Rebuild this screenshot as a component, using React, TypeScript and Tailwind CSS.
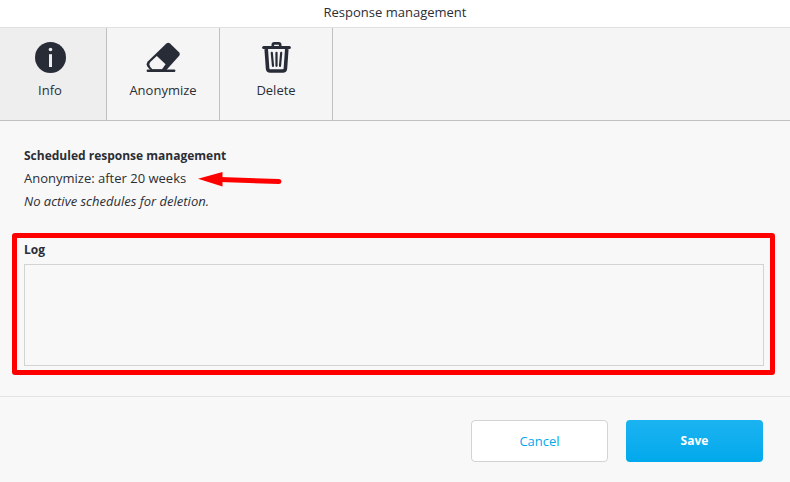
import type { ReactNode } from "react";
import { clsx } from "clsx";

const InfoIcon = () => (
    <svg className="h-9 w-9" viewBox="0 0 36 36" fill="none" aria-hidden="true">
        <circle cx="18.5" cy="17.5" r="15.5" fill="#282c37" />
        <circle cx="18.5" cy="9.5" r="1.8" fill="#eeeeee" />
        <path d="M17 14.2h3v12.8h-3z" fill="#eeeeee" />
    </svg>
);

const EraserIcon = () => (
    <svg className="h-9 w-9" viewBox="0 0 36 36" fill="none" aria-hidden="true">
        <path d="M21.4 3.6Q23.2 2 25 3.6L34 12.2Q35.6 14 34.2 15.8L21.4 30H5.6Q1.8 26.6 1.6 24.4Q1.6 22.6 3 21.2Z" fill="#282c37" />
        <path d="M11.8 16L20.6 24.2L17 29.2H7.4Q4.4 26.4 4.4 24.6Q4.4 23 5.6 21.8Z" fill="#f5f5f5" />
        <path d="M2.8 30.8h26.4" stroke="#282c37" strokeWidth="2.4" strokeLinecap="round" />
    </svg>
);

const TrashIcon = () => (
    <svg className="h-9 w-9" viewBox="0 0 36 36" fill="none" aria-hidden="true">
        <path d="M14.8 6.5V4.9Q14.8 3.4 16.3 3.4H20.7Q22.2 3.4 22.2 4.9V6.5" stroke="#282c37" strokeWidth="2.6" />
        <path d="M5.6 7.4h25.8" stroke="#282c37" strokeWidth="3" strokeLinecap="round" />
        <path d="M8.2 9L9.6 28.6Q9.8 31 12.2 31H24.8Q27.2 31 27.4 28.6L28.8 9" stroke="#282c37" strokeWidth="3.6" />
        <path d="M13.8 12.8l1.2 13M18.5 12.8v13M23.2 12.8l-1.2 13" stroke="#282c37" strokeWidth="2.2" strokeLinecap="round" />
    </svg>
);

interface TabProps {
    label: string;
    icon: ReactNode;
    active?: boolean;
}

const Tab = ({ label, icon, active }: TabProps) => (
    <button
        type="button"
        role="tab"
        aria-selected={!!active}
        className={clsx(
            "flex flex-col items-center gap-1 border-r border-[#c0c0c0] pt-3 pb-5",
            active ? "w-[107px] bg-[#eeeeee] pr-1.5" : "w-[113px]"
        )}
    >
        {icon}
        <span className="leading-5">{label}</span>
    </button>
);

export default function App() {
    return (
        <main className="min-h-screen bg-[#f8f8f8] font-['Open_Sans','Noto_Sans',sans-serif] text-[13px] leading-[23px] text-[#2c2e35]">
            <header className="border-b border-[#e0e0e0] bg-white pt-0.5 pb-1 text-center leading-[21px]">
                <h1>Response management</h1>
            </header>

            <div role="tablist" className="flex border-b border-[#c0c0c0] bg-[#f5f5f5]">
                <Tab label="Info" icon={<InfoIcon />} active />
                <Tab label="Anonymize" icon={<EraserIcon />} />
                <Tab label="Delete" icon={<TrashIcon />} />
            </div>

            <section className="px-6 pt-[23px]">
                <h2 className="text-xs leading-[23px] font-bold">Scheduled response management</h2>
                <div className="flex items-center gap-3">
                    <p>Anonymize: after 20 weeks</p>
                    <svg className="h-4 w-[84px]" viewBox="0 0 84 16" aria-hidden="true">
                        <path d="M0 7.7L24.5 1V15.5Z" fill="#ff0000" />
                        <path d="M22 8.5L81 10.5" stroke="#ff0000" strokeWidth="5" strokeLinecap="round" />
                    </svg>
                </div>
                <p className="italic">No active schedules for deletion.</p>
            </section>

            <section className="mt-5 mr-[15px] ml-3 rounded-[3px] border-5 border-[#ff0000] pr-1.5 pb-1 pl-[7px]">
                <label htmlFor="log" className="block pb-[3px] text-xs leading-[23px] font-bold">Log</label>
                <textarea
                    id="log"
                    readOnly
                    className="block h-[102px] w-full resize-none border border-[#d3d3d3] bg-[#f8f8f8] p-2 outline-none"
                />
            </section>

            <footer className="mt-[21px] flex justify-end gap-[18px] border-t border-[#e2e2e2] py-[23px] pr-[27px] pl-6">
                <button
                    type="button"
                    className="h-[42px] w-[137px] rounded-sm border border-[#d3d3d3] bg-white text-[#00a9ec]"
                >
                    Cancel
                </button>
                <button
                    type="button"
                    className="h-[42px] w-[137px] rounded-sm bg-linear-to-b from-[#1ab3f1] to-[#00a9ec] text-xs font-bold text-white"
                >
                    Save
                </button>
            </footer>
        </main>
    );
}
